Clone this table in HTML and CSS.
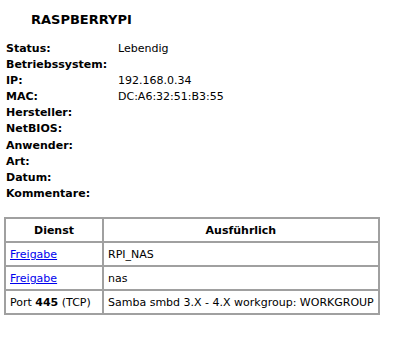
FILE: index.html
```html
<!DOCTYPE html>
<html>
<head>
<meta charset="utf-8">
<link rel="stylesheet" href="styles.css">
</head>
<body>
<div class="page">
  <h1 class="title">RASPBERRYPI</h1>
  <div class="info">
    <div class="label">Status:</div><div class="value">Lebendig</div>
    <div class="label">Betriebssystem:</div><div class="value"></div>
    <div class="label">IP:</div><div class="value">192.168.0.34</div>
    <div class="label">MAC:</div><div class="value">DC:A6:32:51:B3:55</div>
    <div class="label">Hersteller:</div><div class="value"></div>
    <div class="label">NetBIOS:</div><div class="value"></div>
    <div class="label">Anwender:</div><div class="value"></div>
    <div class="label">Art:</div><div class="value"></div>
    <div class="label">Datum:</div><div class="value"></div>
    <div class="label">Kommentare:</div><div class="value"></div>
  </div>
  <table class="services">
    <tr><th class="c1">Dienst</th><th>Ausführlich</th></tr>
    <tr><td><a href="#">Freigabe</a></td><td>RPI_NAS</td></tr>
    <tr><td><a href="#">Freigabe</a></td><td>nas</td></tr>
    <tr><td>Port <b>445</b> (TCP)</td><td>Samba smbd 3.X - 4.X workgroup: WORKGROUP</td></tr>
  </table>
</div>
</body>
</html>
```

FILE: styles.css
```css
html, body {
  margin: 0;
  padding: 0;
  background: #fff;
}
body {
  font-family: "DejaVu Sans", Verdana, sans-serif;
  font-size: 11px;
  color: #000;
}
.page {
  padding: 11px 0 0 0;
}
.title {
  margin: 0 0 0 31px;
  font-size: 13px;
  font-weight: bold;
  line-height: 17px;
  height: 17px;
}
.info {
  display: grid;
  grid-template-columns: 112px 1fr;
  grid-auto-rows: 16.1px;
  margin: 13px 0 0 6px;
  line-height: 16px;
}
.label {
  font-weight: bold;
}
.services {
  margin: 15px 0 0 4px;
  border: 1px solid #a0a0a0;
  border-collapse: separate;
  border-spacing: 0;
  font-size: 11px;
}
.services th, .services td {
  border: 1px solid #a0a0a0;
  height: 21px;
  padding: 1px 4px 0 4px;
  text-align: left;
  white-space: nowrap;
}
.services th {
  text-align: center;
  font-weight: bold;
}
.services th.c1 {
  width: 88px;
}
.services a {
  color: #0000ee;
}
```
